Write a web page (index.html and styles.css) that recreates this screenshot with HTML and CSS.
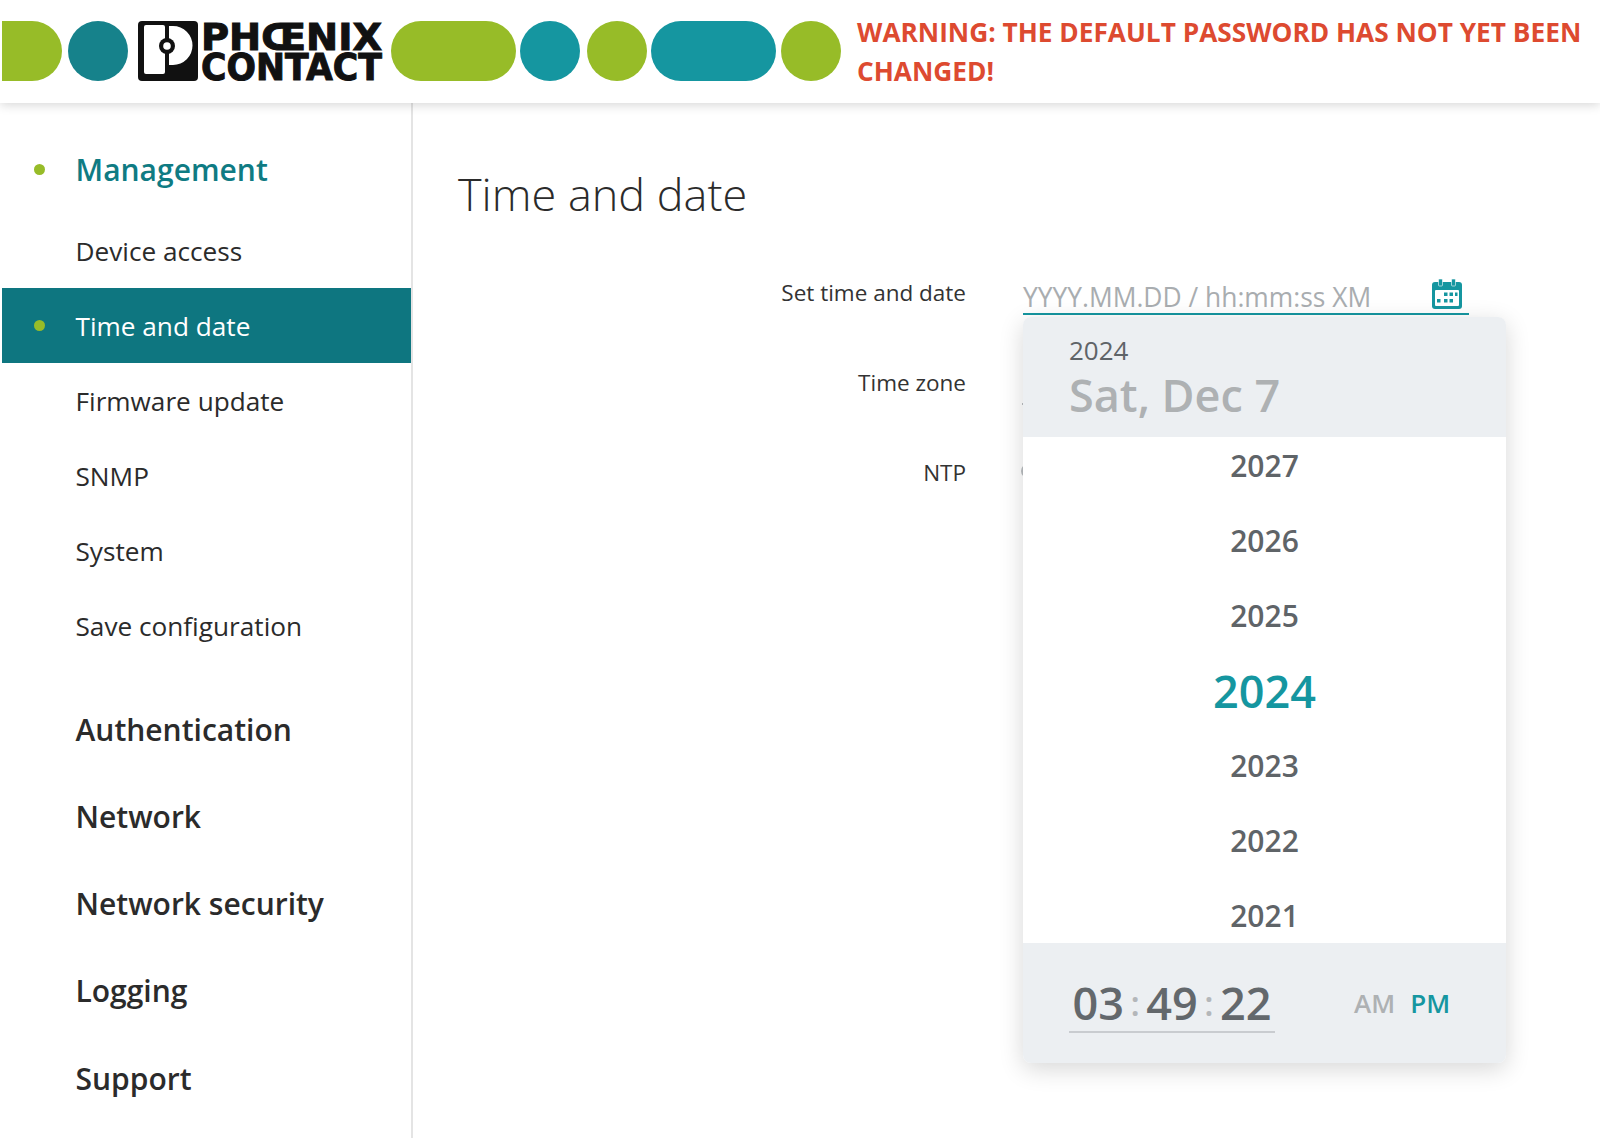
FILE: index.html
```html
<!DOCTYPE html>
<html lang="en">
<head>
<meta charset="utf-8">
<title>Time and date</title>
<link rel="stylesheet" href="styles.css">
</head>
<body>
<header class="topbar">
  <div class="brand">
    <span class="shape green half"></span>
    <span class="shape darkteal circle"></span>
    <svg class="logo" viewBox="0 0 245 60" width="245" height="60" aria-label="Phoenix Contact">
      <rect width="60" height="60" rx="4" fill="#111"/>
      <rect x="6" y="4" width="21" height="49" rx="2" fill="#fff"/>
      <path d="M31 5H35A19.500 19.500 0 0 1 35 44H31Z" fill="#fff"/>
      <circle cx="29" cy="25" r="8" fill="#111"/>
      <circle cx="29" cy="25" r="3.800" fill="#fff"/>
      <text class="wordmark" x="63" y="28.500" textLength="181" lengthAdjust="spacingAndGlyphs">PHŒNIX</text>
      <text class="wordmark" x="63" y="59" textLength="181" lengthAdjust="spacingAndGlyphs">CONTACT</text>
    </svg>
    <span class="shape green pill"></span>
    <span class="shape teal circle"></span>
    <span class="shape green circle"></span>
    <span class="shape teal pill"></span>
    <span class="shape green circle"></span>
  </div>
  <p class="warning">WARNING: THE DEFAULT PASSWORD HAS NOT YET BEEN CHANGED!</p>
</header>
<div class="layout">
  <nav class="sidebar">
    <a class="head current">Management</a>
    <ul class="sublist">
      <li class="sub">Device access</li>
      <li class="sub active">Time and date</li>
      <li class="sub">Firmware update</li>
      <li class="sub">SNMP</li>
      <li class="sub">System</li>
      <li class="sub">Save configuration</li>
    </ul>
    <a class="head">Authentication</a>
    <a class="head">Network</a>
    <a class="head">Network security</a>
    <a class="head">Logging</a>
    <a class="head">Support</a>
  </nav>
  <main class="content">
    <h1 class="title">Time and date</h1>
    <div class="form">
      <div class="row">
        <label class="label">Set time and date</label>
        <div class="field active-field">
          <div class="input">
            <span class="placeholder">YYYY.MM.DD / hh:mm:ss XM</span>
            <svg class="cal" viewBox="0 0 30 30" width="30" height="30">
              <rect x="0" y="3" width="30" height="27" rx="3" fill="#1596a0"/>
              <rect x="6.500" y="0" width="4" height="7" rx="1" fill="#1596a0" stroke="#fff" stroke-width=".6"/>
              <rect x="19.500" y="0" width="4" height="7" rx="1" fill="#1596a0" stroke="#fff" stroke-width=".6"/>
              <rect x="3" y="11" width="24" height="16" rx="1" fill="#fff"/>
              <path d="M12 13.500h3.500v3.500h-3.500zM17.500 13.500h3.500v3.500h-3.500zM23 13.500h2.500v3.500H23zM5 20h3.500v3.500H5zM12 20h3.500v3.500h-3.500zM17.500 20h3.500v3.500h-3.500z" fill="#1596a0"/>
            </svg>
          </div>
          <div class="picker">
            <div class="picker-head">
              <div class="picker-year">2024</div>
              <div class="picker-date">Sat, Dec 7</div>
            </div>
            <div class="years">
              <div class="year">2027</div>
              <div class="year">2026</div>
              <div class="year">2025</div>
              <div class="year selected">2024</div>
              <div class="year">2023</div>
              <div class="year">2022</div>
              <div class="year">2021</div>
            </div>
            <div class="picker-foot">
              <div class="clock">
                <span>03</span><i class="sep">:</i><span>49</span><i class="sep">:</i><span>22</span>
              </div>
              <div class="ampm"><span class="am">AM</span><span class="pm">PM</span></div>
            </div>
          </div>
        </div>
      </div>
      <div class="row">
        <label class="label">Time zone</label>
        <div class="field"><div class="stub line"></div></div>
      </div>
      <div class="row">
        <label class="label">NTP</label>
        <div class="field"><div class="stub dot"></div></div>
      </div>
    </div>
  </main>
</div>
</body>
</html>
```
FILE: styles.css
```css
* { box-sizing: border-box; }
html, body { margin: 0; padding: 0; }
body {
  width: 1600px;
  height: 1138px;
  overflow: hidden;
  background: #fff;
  font-family: "Open Sans", "Noto Sans", sans-serif;
  color: #222;
}
.topbar {
  position: relative;
  z-index: 2;
  height: 103px;
  display: flex;
  align-items: flex-start;
  padding-top: 21px;
  background: #fff;
  box-shadow: 0 2px 10px rgba(0, 0, 0, .16);
}
.brand { display: flex; align-items: center; flex: none; margin-left: 2px; height: 60px; }
.shape { display: block; height: 60px; border-radius: 30px; flex: none; }
.green { background: #97bc28; }
.teal { background: #1596a0; }
.darkteal { background: #16828b; }
.half { width: 60px; border-radius: 0 30px 30px 0; margin-right: 6px; }
.circle { width: 60px; }
.pill { width: 125px; }
.logo { flex: none; margin: 0 8px 0 10px; overflow: visible; }
.wordmark {
  font-family: "DejaVu Sans", "Liberation Sans", sans-serif;
  font-weight: 700;
  font-size: 37px;
  fill: #111;
  stroke: #111;
  stroke-width: 1px;
}
.brand .pill.green { margin-right: 4px; }
.brand .circle.teal { margin-right: 7px; }
.brand .circle.green { margin-right: 4px; }
.brand .pill.teal { margin-right: 5px; }
.warning {
  margin: -8px 0 0 12px;
  width: 745px;
  font-size: 26.250px;
  font-weight: 700;
  line-height: 39px;
  color: #dd4a30;
}
.layout { display: flex; height: 1035px; }
.sidebar {
  width: 413px;
  flex: none;
  padding: 23px 0 0 2px;
  border-right: 2px solid #e4e4e4;
}
.head {
  position: relative;
  display: flex;
  align-items: center;
  height: 87.100px;
  padding-left: 73.500px;
  font-size: 30px;
  font-weight: 600;
  color: #2b2b2b;
}
.head.current { color: #0f7b83; }
.head.current::before, .sub.active::before {
  content: "";
  position: absolute;
  left: 32px;
  top: 50%;
  width: 11px;
  height: 11px;
  margin-top: -5.500px;
  border-radius: 50%;
  background: #97bc28;
}
.sublist { list-style: none; margin: 0 0 23px; padding: 0; }
.sub {
  position: relative;
  display: flex;
  align-items: center;
  height: 75px;
  padding-left: 73.500px;
  font-size: 26.200px;
  color: #2b2b2b;
}
.sub.active { background: #0e7680; color: #fff; }
.content { flex: 1; padding: 60px 0 0 45px; }
.title {
  margin: 0 0 25px;
  font-size: 45px;
  font-weight: 300;
  line-height: 62px;
  color: #2b2b2b;
}
.row { display: flex; height: 90px; }
.label {
  width: 508px;
  flex: none;
  height: 85px;
  display: flex;
  align-items: center;
  justify-content: flex-end;
  font-size: 22.500px;
  color: #333;
}
.field { position: relative; margin-left: 57px; width: 446px; }
.input {
  position: absolute;
  left: 0;
  right: 0;
  top: 26px;
  height: 39px;
  display: flex;
  align-items: center;
  justify-content: space-between;
  padding-right: 7px;
  border-bottom: 2px solid #1596a0;
}
.placeholder { font-size: 26.400px; color: #a9adb0; line-height: 38px; padding-top: 4px; }
.cal { flex: none; margin-bottom: 1px; }
.picker {
  position: absolute;
  z-index: 3;
  left: 0;
  top: 67px;
  width: 483px;
  height: 746px;
  display: flex;
  flex-direction: column;
  border-radius: 8px;
  overflow: hidden;
  background: #fff;
  box-shadow: 0 6px 24px rgba(0, 0, 0, .16);
}
.picker-head {
  height: 120px;
  flex: none;
  padding: 15px 0 0 46px;
  background: #eceff2;
}
.picker-year { font-size: 26px; line-height: 36px; font-weight: 500; color: #5f6468; }
.picker-date { font-size: 45px; line-height: 54px; font-weight: 600; color: #aeb1b3; }
.years { flex: 1; overflow: hidden; min-height: 0; }
.year {
  height: 75px;
  display: flex;
  align-items: center;
  justify-content: center;
  font-size: 30px;
  font-weight: 600;
  color: #5f6468;
  position: relative;
  top: -9.500px;
}
.year.selected { font-size: 45px; color: #1596a0; }
.picker-foot {
  position: relative;
  height: 120px;
  flex: none;
  display: flex;
  align-items: flex-start;
  padding: 26px 0 0 46px;
  background: #eceff2;
}
.clock {
  width: 206px;
  height: 64px;
  padding-top: 6px;
  display: flex;
  align-items: center;
  justify-content: center;
  border-bottom: 2px solid #c9ccd0;
  font-size: 45px;
  font-weight: 600;
  color: #63686c;
  line-height: 56px;
}
.sep { font-style: normal; font-size: 34px; margin: 0 6.500px; color: #b4b7ba; }
.ampm {
  display: flex;
  gap: 15px;
  margin-left: 79px;
  height: 68px;
  align-items: center;
  font-size: 26px;
  font-weight: 600;
}
.am { color: #aeb1b3; }
.pm { color: #1596a0; }
.stub.line {
  position: absolute;
  left: -1px;
  top: 63px;
  width: 446px;
  height: 2px;
  background: #b9bdc0;
}
.stub.dot {
  position: absolute;
  left: -2px;
  top: 34px;
  width: 14px;
  height: 14px;
  border: 2px solid #b9bdc0;
  border-radius: 50%;
}
```
